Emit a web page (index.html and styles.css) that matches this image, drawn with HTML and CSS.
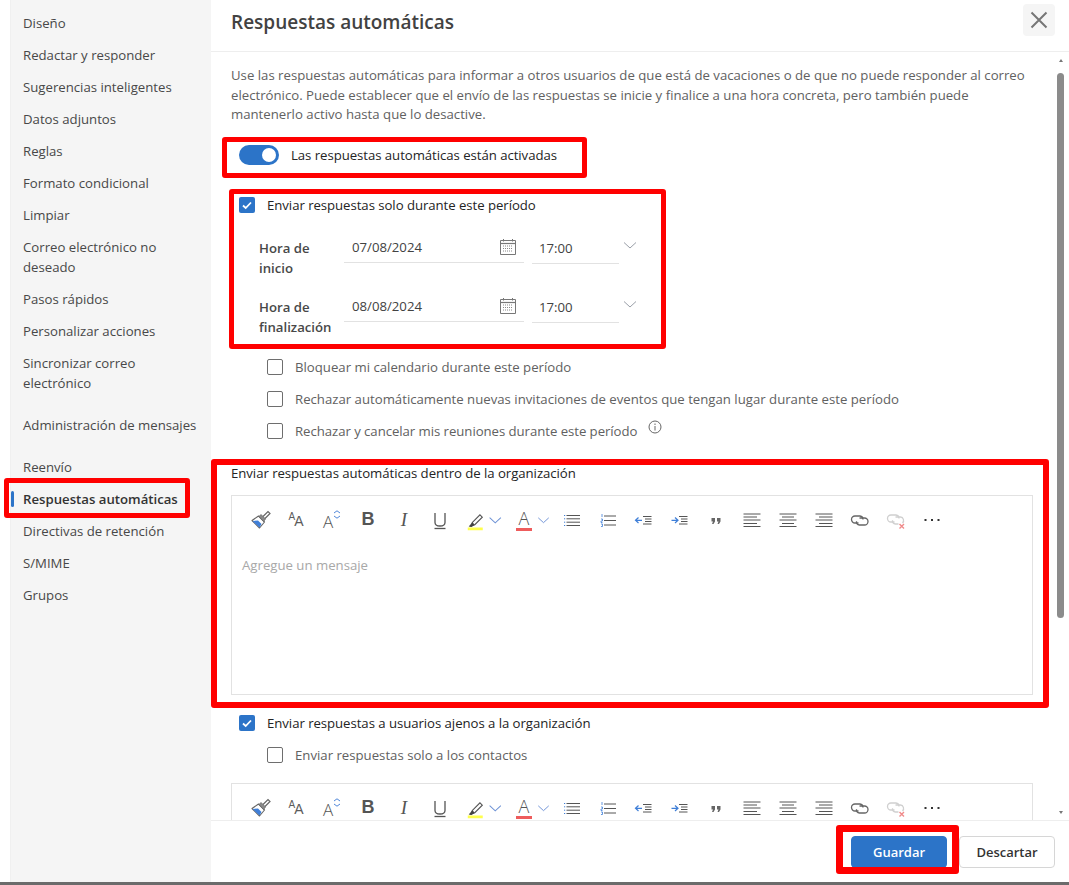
FILE: index.html
```html
<!DOCTYPE html>
<html lang="es">
<head>
<meta charset="utf-8">
<title>Respuestas automáticas</title>
<link rel="stylesheet" href="styles.css">
</head>
<body>
<svg class="defs" width="0" height="0" aria-hidden="true">
  <symbol id="i-brush" viewBox="0 0 24 24">
    <path d="M4 12.500 11.500 20 16.500 14 10.500 8Z" fill="#fff" stroke="#666" stroke-width="1.100" stroke-linejoin="round"/>
    <path d="M4.500 13 10 12.500 13.500 16 11.500 19.500Z" fill="#3f7fd8"/>
    <path d="M11 8.500 13 6.500 17.500 11 15.500 13.500Z" fill="#8a8a8a" stroke="#666" stroke-width=".8"/>
    <path d="M15 8.500 20 3.500 22 5.500 17 10.500" fill="none" stroke="#666" stroke-width="1.200"/>
  </symbol>
  <symbol id="i-updown" viewBox="0 0 8 9">
    <path d="M1 3 4 .8 7 3M1 6 4 8.200 7 6" fill="none" stroke="#4f86d8" stroke-width="1"/>
  </symbol>
  <symbol id="i-u" viewBox="0 0 24 24">
    <path d="M7 5V14.500Q7 18 12 18T17 14.500V5" fill="none" stroke="#555" stroke-width="1.300"/>
    <path d="M6.500 20.500H17.500" stroke="#555" stroke-width="1.300"/>
  </symbol>
  <symbol id="i-mark" viewBox="0 0 24 24">
    <path d="M9 14.500 17 6.500 19.500 9 11.500 17 7.500 18.500Z" fill="none" stroke="#555" stroke-width="1.200"/>
    <path d="M5 19 9 14.500 11.500 17 8 19.500Z" fill="#444"/>
    <path d="M4 21.500H20" stroke="#ffff4d" stroke-width="3"/>
  </symbol>
  <symbol id="i-chev" viewBox="0 0 24 24"><path d="M6 9.500 12 15 18 9.500" fill="none" stroke="#6f93d6" stroke-width="1.100"/></symbol>
  <symbol id="i-bul" viewBox="0 0 24 24">
    <path d="M6.500 7.500H20M6.500 10.800H20M6.500 14.200H20M6.500 17.500H20" stroke="#555" stroke-width="1"/>
    <path d="M4 7.500H5.200M4 10.800H5.200M4 14.200H5.200M4 17.500H5.200" stroke="#3f7fd8" stroke-width="1"/>
  </symbol>
  <symbol id="i-num" viewBox="0 0 24 24">
    <path d="M8 8H20M8 12.500H20M8 17H20" stroke="#555" stroke-width="1"/>
    <path d="M6 6V9M5 11H6.500V13H5V14.500H6.500M5 16H6.500V18.500H5" fill="none" stroke="#3f7fd8" stroke-width=".8"/>
  </symbol>
  <symbol id="i-out" viewBox="0 0 24 24">
    <path d="M11 8.500H19.500M13 11H19.500M13 13.500H19.500M11 16H19.500" stroke="#555" stroke-width="1"/>
    <path d="M3.500 12.300H10M6.500 9.500 3.500 12.300 6.500 15" fill="none" stroke="#3f7fd8" stroke-width="1.200"/>
  </symbol>
  <symbol id="i-ind" viewBox="0 0 24 24">
    <path d="M11 8.500H19.500M13 11H19.500M13 13.500H19.500M11 16H19.500" stroke="#555" stroke-width="1"/>
    <path d="M3.500 12.300H10M7 9.500 10 12.300 7 15" fill="none" stroke="#3f7fd8" stroke-width="1.200"/>
  </symbol>
  <symbol id="i-quote" viewBox="0 0 24 24">
    <path d="M7.500 10H11V13.500L9.500 16H8L9 13.500H7.500ZM13 10H16.500V13.500L15 16H13.500L14.500 13.500H13Z" fill="#666"/>
  </symbol>
  <symbol id="i-al" viewBox="0 0 24 24"><path d="M3.500 6H20.500M3.500 9H17M3.500 12H20.500M3.500 15.500H17M3.500 18.500H20.500" stroke="#555" stroke-width="1"/></symbol>
  <symbol id="i-ac" viewBox="0 0 24 24"><path d="M3.500 6H20.500M6 9H18M3.500 12H20.500M6 15.500H18M3.500 18.500H20.500" stroke="#555" stroke-width="1"/></symbol>
  <symbol id="i-ar" viewBox="0 0 24 24"><path d="M3.500 6H20.500M7 9H20.500M3.500 12H20.500M7 15.500H20.500M3.500 18.500H20.500" stroke="#555" stroke-width="1"/></symbol>
  <symbol id="i-link" viewBox="0 0 24 24">
    <path d="M10.500 15H7A3.500 3.500 0 0 1 7 8H12A3.500 3.500 0 0 1 15 11.500" fill="none" stroke="#666" stroke-width="1.300"/>
    <path d="M11.500 10H16.500A3.500 3.500 0 0 1 16.500 17H11.500A3.500 3.500 0 0 1 8.500 13.200" fill="none" stroke="#666" stroke-width="1.300"/>
  </symbol>
  <symbol id="i-unlink" viewBox="0 0 24 24">
    <path d="M10.500 14H7A3.500 3.500 0 0 1 7 7H12A3.500 3.500 0 0 1 15 10.500" fill="none" stroke="#d0d0d0" stroke-width="1.300"/>
    <path d="M11.500 9H16.500A3.500 3.500 0 0 1 18.500 15M14.500 16H11.500A3.500 3.500 0 0 1 8.500 12.200" fill="none" stroke="#d0d0d0" stroke-width="1.300"/>
    <path d="M15.500 16 20 20.500M20 16 15.500 20.500" stroke="#f08a8a" stroke-width="1.400"/>
  </symbol>
  <symbol id="i-more" viewBox="0 0 24 24"><path d="M4.500 12H6.500M11 12H13M17.500 12H19.500" stroke="#333" stroke-width="2"/></symbol>
  <symbol id="i-cal" viewBox="0 0 18 18">
    <path d="M1.500 2.500H16.500V16.500H1.500Z" fill="none" stroke="#777"/>
    <path d="M1.500 5.500H16.500" stroke="#777" stroke-width="1.200"/>
    <path d="M4.500 1V3.500M13.500 1V3.500" stroke="#777"/>
    <path d="M4 8H14M4 10.500H14M4 13H14" stroke="#888" stroke-dasharray="1 1"/>
  </symbol>
  <symbol id="i-down" viewBox="0 0 16 16"><path d="M2 4.500 8 10 14 4.500" fill="none" stroke="#9a9fa8" stroke-width="1"/></symbol>
  <symbol id="i-check" viewBox="0 0 16 16"><path d="M4 8.500 6.700 11 12 5.500" fill="none" stroke="#fff" stroke-width="1.800"/></symbol>
</svg>

<div class="screen">
  <div class="window">
    <nav class="side">
      <a class="side-item">Diseño</a>
      <a class="side-item">Redactar y responder</a>
      <a class="side-item">Sugerencias inteligentes</a>
      <a class="side-item">Datos adjuntos</a>
      <a class="side-item">Reglas</a>
      <a class="side-item">Formato condicional</a>
      <a class="side-item">Limpiar</a>
      <a class="side-item">Correo electrónico no deseado</a>
      <a class="side-item">Pasos rápidos</a>
      <a class="side-item">Personalizar acciones</a>
      <a class="side-item">Sincronizar correo electrónico</a>
      <a class="side-item side-gap">Administración de mensajes</a>
      <a class="side-item side-gap">Reenvío</a>
      <a class="side-item is-active">Respuestas automáticas</a>
      <a class="side-item">Directivas de retención</a>
      <a class="side-item">S/MIME</a>
      <a class="side-item">Grupos</a>
    </nav>

    <main class="main">
      <header class="head">
        <h1 class="title">Respuestas automáticas</h1>
        <button class="close" aria-label="Cerrar">
          <svg width="18" height="18" viewBox="0 0 18 18"><path d="M1.500 1.500 16.500 16.500M16.500 1.500 1.500 16.500" stroke="#767676" stroke-width="2"/></svg>
        </button>
      </header>

      <div class="scroll">
        <div class="content">
          <p class="intro">Use las respuestas automáticas para informar a otros usuarios de que está de vacaciones o de que no puede responder al correo electrónico. Puede establecer que el envío de las respuestas se inicie y finalice a una hora concreta, pero también puede mantenerlo activo hasta que lo desactive.</p>

          <div class="toggle-row">
            <span class="toggle"><span class="knob"></span></span>
            <span class="label tight">Las respuestas automáticas están activadas</span>
          </div>

          <label class="check-row period">
            <span class="box is-on"><svg width="16" height="16"><use href="#i-check"/></svg></span>
            <span class="label tight">Enviar respuestas solo durante este período</span>
          </label>

          <div class="time-row first">
            <div class="time-label">Hora de inicio</div>
            <div class="field date"><span>07/08/2024</span><svg width="18" height="18"><use href="#i-cal"/></svg></div>
            <div class="field time"><span>17:00</span></div>
            <svg class="time-chev" width="16" height="16"><use href="#i-down"/></svg>
          </div>
          <div class="time-row">
            <div class="time-label">Hora de finalización</div>
            <div class="field date"><span>08/08/2024</span><svg width="18" height="18"><use href="#i-cal"/></svg></div>
            <div class="field time"><span>17:00</span></div>
            <svg class="time-chev" width="16" height="16"><use href="#i-down"/></svg>
          </div>

          <label class="check-row sub opt1"><span class="box"></span><span class="label muted">Bloquear mi calendario durante este período</span></label>
          <label class="check-row sub opt"><span class="box"></span><span class="label muted">Rechazar automáticamente nuevas invitaciones de eventos que tengan lugar durante este período</span></label>
          <label class="check-row sub opt"><span class="box"></span><span class="label muted tight">Rechazar y cancelar mis reuniones durante este período</span>
            <svg class="info" width="14" height="14" viewBox="0 0 14 14"><circle cx="7" cy="7" r="6" fill="none" stroke="#666"/><path d="M7 6V10.500M7 3.500V5" stroke="#666"/></svg>
          </label>

          <div class="section-label tight">Enviar respuestas automáticas dentro de la organización</div>
          <div class="editor">
            <div class="toolbar">
              <span class="tb"><svg width="24" height="24"><use href="#i-brush"/></svg></span>
              <span class="tb"><span class="ga ga-s">A</span><span class="ga ga-m">A</span></span>
              <span class="tb"><span class="ga ga-l">A</span><svg class="updown" width="8" height="9"><use href="#i-updown"/></svg></span>
              <span class="tb gb">B</span>
              <span class="tb gi">I</span>
              <span class="tb"><svg width="24" height="24"><use href="#i-u"/></svg></span>
              <span class="tb split"><svg width="24" height="24"><use href="#i-mark"/></svg><svg class="mini" width="24" height="24"><use href="#i-chev"/></svg></span>
              <span class="tb split"><span class="gcolor">A</span><svg class="mini" width="24" height="24"><use href="#i-chev"/></svg></span>
              <span class="tb"><svg width="24" height="24"><use href="#i-bul"/></svg></span>
              <span class="tb"><svg width="24" height="24"><use href="#i-num"/></svg></span>
              <span class="tb"><svg width="24" height="24"><use href="#i-out"/></svg></span>
              <span class="tb"><svg width="24" height="24"><use href="#i-ind"/></svg></span>
              <span class="tb"><svg width="24" height="24"><use href="#i-quote"/></svg></span>
              <span class="tb"><svg width="24" height="24"><use href="#i-al"/></svg></span>
              <span class="tb"><svg width="24" height="24"><use href="#i-ac"/></svg></span>
              <span class="tb"><svg width="24" height="24"><use href="#i-ar"/></svg></span>
              <span class="tb"><svg width="24" height="24"><use href="#i-link"/></svg></span>
              <span class="tb"><svg width="24" height="24"><use href="#i-unlink"/></svg></span>
              <span class="tb"><svg width="24" height="24"><use href="#i-more"/></svg></span>
            </div>
            <div class="placeholder">Agregue un mensaje</div>
          </div>

          <label class="check-row outside">
            <span class="box is-on"><svg width="16" height="16"><use href="#i-check"/></svg></span>
            <span class="label tight">Enviar respuestas a usuarios ajenos a la organización</span>
          </label>
          <label class="check-row sub contacts"><span class="box"></span><span class="label muted">Enviar respuestas solo a los contactos</span></label>

          <div class="editor second">
            <div class="toolbar">
              <span class="tb"><svg width="24" height="24"><use href="#i-brush"/></svg></span>
              <span class="tb"><span class="ga ga-s">A</span><span class="ga ga-m">A</span></span>
              <span class="tb"><span class="ga ga-l">A</span><svg class="updown" width="8" height="9"><use href="#i-updown"/></svg></span>
              <span class="tb gb">B</span>
              <span class="tb gi">I</span>
              <span class="tb"><svg width="24" height="24"><use href="#i-u"/></svg></span>
              <span class="tb split"><svg width="24" height="24"><use href="#i-mark"/></svg><svg class="mini" width="24" height="24"><use href="#i-chev"/></svg></span>
              <span class="tb split"><span class="gcolor">A</span><svg class="mini" width="24" height="24"><use href="#i-chev"/></svg></span>
              <span class="tb"><svg width="24" height="24"><use href="#i-bul"/></svg></span>
              <span class="tb"><svg width="24" height="24"><use href="#i-num"/></svg></span>
              <span class="tb"><svg width="24" height="24"><use href="#i-out"/></svg></span>
              <span class="tb"><svg width="24" height="24"><use href="#i-ind"/></svg></span>
              <span class="tb"><svg width="24" height="24"><use href="#i-quote"/></svg></span>
              <span class="tb"><svg width="24" height="24"><use href="#i-al"/></svg></span>
              <span class="tb"><svg width="24" height="24"><use href="#i-ac"/></svg></span>
              <span class="tb"><svg width="24" height="24"><use href="#i-ar"/></svg></span>
              <span class="tb"><svg width="24" height="24"><use href="#i-link"/></svg></span>
              <span class="tb"><svg width="24" height="24"><use href="#i-unlink"/></svg></span>
              <span class="tb"><svg width="24" height="24"><use href="#i-more"/></svg></span>
            </div>
          </div>
        </div>
        <div class="scrollbar">
          <span class="arrow up"></span>
          <span class="thumb"></span>
          <span class="arrow down"></span>
        </div>
      </div>

      <footer class="foot">
        <button class="btn primary">Guardar</button>
        <button class="btn">Descartar</button>
      </footer>
    </main>
  </div>
  <div class="baseline"></div>

  <div class="mark mark-toggle"></div>
  <div class="mark mark-period"></div>
  <div class="mark mark-nav"></div>
  <div class="mark mark-editor"></div>
  <div class="mark mark-save"></div>
</div>
</body>
</html>
```

FILE: styles.css
```css
* { box-sizing: border-box; }
html, body { margin: 0; padding: 0; background: #fff; }
body {
  font-family: "Open Sans", "Noto Sans", "Liberation Sans", sans-serif;
  font-size: 13.2px;
  color: #242424;
  overflow: hidden;
}
.defs { position: absolute; }

.screen { position: relative; width: 1069px; height: 885px; display: flex; flex-direction: column; }
.window { flex: 1; display: flex; min-height: 0; padding-left: 10px; }
.baseline { height: 3px; background: #6b6b6b; }

.side {
  width: 201px;
  background: #f5f5f5;
  border-left: 1px solid #f0f0f0;
  padding: 7px 0 0 12px;
  display: flex;
  flex-direction: column;
  flex-shrink: 0;
}
.side-item {
  min-height: 32px;
  padding: 6px 0;
  line-height: 20px;
  color: #484848;
  width: 180px;
}
.side-gap { margin-top: 10px; }
.is-active { font-weight: 600; color: #333; position: relative; }
.is-active::before {
  content: "";
  position: absolute;
  left: -12px;
  top: 8px;
  width: 3px;
  height: 16px;
  border-radius: 2px;
  background: #2c74c8;
}

.main { flex: 1; min-width: 0; display: flex; flex-direction: column; }
.head {
  height: 52px;
  border-bottom: 1px solid #eeeeee;
  display: flex;
  align-items: flex-start;
  justify-content: space-between;
  padding: 4px 14px 0 20px;
  flex-shrink: 0;
}
.title { margin: 3px 0 0; font-size: 19px; font-weight: 600; line-height: 30px; color: #424242; }
.close {
  width: 32px;
  height: 32px;
  border: 0;
  border-radius: 4px;
  background: #f5f5f5;
  display: flex;
  align-items: center;
  justify-content: center;
  padding: 0;
}

.scroll { flex: 1; min-height: 0; display: flex; overflow: hidden; }
.content { flex: 1; min-width: 0; padding: 14px 0 0 20px; overflow: hidden; }
.intro { margin: 0; width: 800px; line-height: 19.500px; color: #616161; }

.label { line-height: 20px; white-space: nowrap; }
.muted { color: #616161; }
.tight { letter-spacing: -0.05px; }

.toggle-row { display: flex; align-items: center; gap: 12px; height: 20px; margin: 20px 0 0 8px; }
.toggle { width: 40px; height: 20px; border-radius: 10px; background: #2c74c8; position: relative; flex-shrink: 0; }
.knob { position: absolute; right: 3px; top: 3px; width: 14px; height: 14px; border-radius: 50%; background: #fff; }

.check-row { display: flex; align-items: center; gap: 12px; height: 16px; margin-left: 8px; }
.period { margin-top: 32px; }
.sub { margin-left: 36px; }
.opt1 { margin-top: 8px; }
.opt { margin-top: 16px; }
.outside { margin-top: 20px; }
.contacts { margin-top: 16px; }
.box {
  width: 16px;
  height: 16px;
  border: 1px solid #6e6e6e;
  border-radius: 2px;
  background: #fff;
  flex-shrink: 0;
  display: block;
}
.box svg { display: block; }
.box.is-on { background: #2c74c8; border: 0; }
.info { margin: -8px 0 0 -1px; }

.time-row { display: flex; align-items: flex-start; margin-left: 28px; height: 59px; }
.first { margin-top: 20px; }
.time-label { width: 85px; line-height: 20px; font-weight: 600; color: #484848; padding-top: 5.500px; flex-shrink: 0; }
.field {
  height: 30px;
  border-bottom: 1px solid #e2e2e2;
  display: flex;
  align-items: center;
  justify-content: space-between;
  padding: 0 7px 1px 8px;
  color: #424242;
}
.date { width: 180px; }
.time { width: 87px; height: 31px; margin-left: 8px; padding: 2px 7px 1px 7px; }
.time-chev { margin: 5px 0 0 3px; }

.section-label { margin-top: 24px; line-height: 20px; color: #242424; }
.editor { margin-top: 12px; width: 802px; height: 200px; border: 1px solid #e2e2e2; }
.second { margin-top: 20px; height: 60px; }
.toolbar { display: flex; padding: 12px 0 0 10px; height: 49px; }
.tb { width: 36px; height: 24px; display: flex; align-items: center; justify-content: center; flex-shrink: 0; }
.tb svg { display: block; }
.split { width: 48px; justify-content: flex-start; padding-left: 6px; }
.mini { margin-left: -3px; }
.placeholder { margin: 10px 0 0 10px; line-height: 20px; color: #a8a8a8; }

.ga { font-family: "Liberation Sans", sans-serif; color: #5c5c5c; line-height: 1; }
.ga-s { font-size: 10px; margin: -5px -1px 0 0; }
.ga-m { font-size: 14px; margin-top: 3px; }
.ga-l { font-family: "Open Sans", sans-serif; font-weight: 300; font-size: 17px; color: #555; margin-top: 3px; }
.updown { margin: -10px 0 0 0; }
.gb { font: 700 18px "Liberation Sans", sans-serif; color: #555; }
.gi { font: italic 400 19px "Liberation Serif", serif; color: #555; }
.gcolor {
  width: 24px;
  margin-left: 0;
  height: 23px;
  padding: 0 4px;
  background: linear-gradient(#ee5c5c, #ee5c5c) 4px 20px / 16px 3px no-repeat;
  font-family: "Open Sans", sans-serif;
  font-weight: 300;
  font-size: 18px;
  line-height: 21px;
  text-align: center;
  color: #555;
  flex-shrink: 0;
}

.scrollbar { width: 11px; margin-right: 3px; position: relative; flex-shrink: 0; display: flex; flex-direction: column; align-items: center; padding-top: 7px; }
.arrow { width: 0; height: 0; border-left: 2.500px solid transparent; border-right: 2.500px solid transparent; }
.up { border-bottom: 3px solid #777; }
.down { border-top: 3px solid #777; position: absolute; bottom: 6px; }
.thumb { width: 7px; height: 545px; margin-top: 11px; background: #8b8b8b; border-radius: 4px; }

.foot {
  height: 62px;
  border-top: 1px solid #eeeeee;
  display: flex;
  justify-content: flex-end;
  gap: 12px;
  padding: 15px 14px 0 0;
  flex-shrink: 0;
}
.btn {
  width: 96px;
  height: 32px;
  border: 1px solid #d6d6d6;
  border-radius: 4px;
  background: #fff;
  font: 600 13px "Open Sans", "Noto Sans", sans-serif;
  color: #333;
  padding: 0;
}
.primary { background: #2c74c8; border-color: #2c74c8; color: #fff; }

.mark { position: absolute; border: 5px solid #ff0000; border-radius: 3px; pointer-events: none; }
.mark-toggle { left: 222px; top: 137px; width: 365px; height: 41px; }
.mark-period { left: 229px; top: 189px; width: 437px; height: 160px; }
.mark-nav { left: 4px; top: 478px; width: 186px; height: 40px; }
.mark-editor { left: 211px; top: 459px; width: 838px; height: 249px; border-width: 6px; }
.mark-save { left: 836px; top: 825px; width: 123px; height: 49px; border-width: 7px; }
```
